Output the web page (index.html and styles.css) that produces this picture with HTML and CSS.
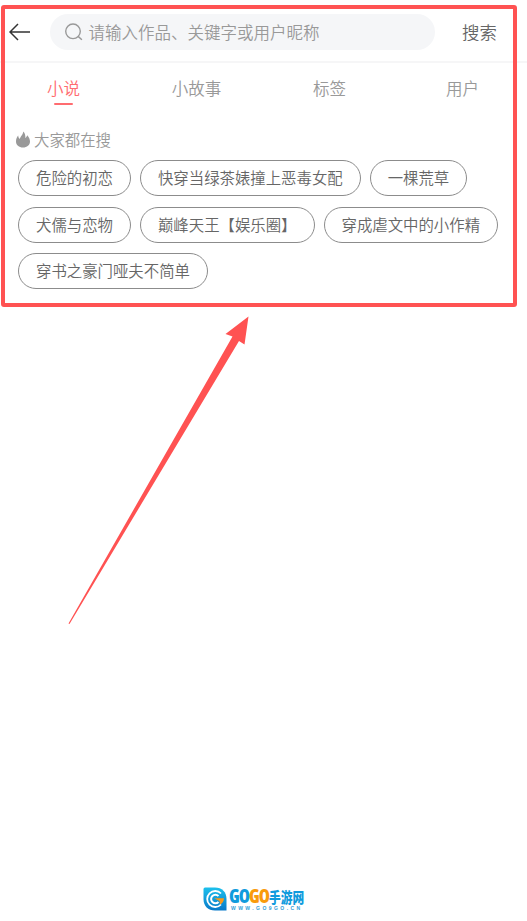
FILE: index.html
```
<!DOCTYPE html>
<html lang="zh-CN">
<head>
    <meta charset="UTF-8">
    <meta name="viewport" content="width=device-width, initial-scale=1.0">
    <title>搜索</title>
    <link rel="stylesheet" href="styles.css">
</head>
<body>
    <div class="page">
        <header class="search-header">
            <svg class="back-icon" width="22" height="18" viewBox="0 0 22 18">
                <path d="M9 1 L1 9 L9 17 M1 9 H21" fill="none" stroke="#333" stroke-width="1.5"/>
            </svg>
            <div class="search-box">
                <svg class="search-icon" width="19" height="18" viewBox="0 0 19 18">
                    <circle cx="8" cy="8.3" r="7.3" fill="none" stroke="#999" stroke-width="1.4"/>
                    <path d="M13.1 13.4 L16.9 16.7" stroke="#999" stroke-width="1.4"/>
                </svg>
                <span>请输入作品、关键字或用户昵称</span>
            </div>
            <div class="search-btn">搜索</div>
        </header>

        <nav class="tabs">
            <div class="tab active">小说</div>
            <div class="tab">小故事</div>
            <div class="tab">标签</div>
            <div class="tab">用户</div>
        </nav>

        <section class="hot">
            <div class="hot-title">
                <svg width="14" height="17" viewBox="0 0 14 17">
                    <path d="M7.2 0.5 C9 2.2 9.6 4.4 9.3 7 C10.3 6.4 10.9 5.4 11.2 4.2 C13 6 14 8.3 14 10.5 C14 14 11 16.5 7 16.5 C3 16.5 0 14 0 10.5 C0 8.3 0.8 6.2 2.2 4.6 C2.3 6 2.7 7.2 3.8 8 C4.4 5.2 7 4 7.2 0.5 Z" fill="#999"/>
                </svg>
                <span class="hot-label">大家都在搜</span>
            </div>
            <div class="chips">
                <span class="chip">危险的初恋</span>
                <span class="chip">快穿当绿茶婊撞上恶毒女配</span>
                <span class="chip">一棵荒草</span>
                <span class="chip">犬儒与恋物</span>
                <span class="chip">巅峰天王【娱乐圈】</span>
                <span class="chip">穿成虐文中的小作精</span>
                <span class="chip">穿书之豪门哑夫不简单</span>
            </div>
        </section>

        <footer class="logo">
            <svg width="24" height="24" viewBox="0 0 24 24">
                <defs>
                    <linearGradient id="blue" x1="0" y1="0" x2="0" y2="1">
                        <stop offset="0" stop-color="#1cc0ec"/>
                        <stop offset="1" stop-color="#0879c9"/>
                    </linearGradient>
                </defs>
                <path d="M2 0.5 H12 C19 0.5 23.5 5 23.5 12 V23.5 H12 C5 23.5 0.5 19 0.5 12 V2 Q0.5 0.5 2 0.5 Z" fill="url(#blue)"/>
                <path d="M18 6.5 A8 8 0 1 0 18 17.5" fill="none" stroke="#fff" stroke-width="1.8"/>
                <path d="M15.5 9 A4.3 4.3 0 1 0 15.5 15" fill="none" stroke="#fff" stroke-width="2"/>
                <path d="M11 11.2 H21 C21 14 19.5 16.5 17 17.5 L16.5 14 Z" fill="#f79a1c"/>
            </svg>
            <div class="logo-text">
                <div class="logo-name">
                    <span class="logo-latin">GO</span>
                    <span class="logo-latin logo-orange">GO</span>
                    <span class="logo-cjk">手游网</span>
                </div>
                <div class="logo-url">WWW.GO9GO.CN</div>
            </div>
        </footer>

        <!-- highlight frame and pointer over the page -->
        <div class="frame"></div>
        <svg class="arrow" width="527" height="921" viewBox="0 0 527 921">
            <path d="M248.5 316.5 L225.5 334 L232.5 336.5 L68.5 623.5 L69.5 624 L239 341 L244.5 344.5 Z" fill="#ff5252"/>
        </svg>
    </div>
</body>
</html>
```
FILE: styles.css
```
body {
    margin: 0;
    background-color: #fff;
    font-family: "Noto Sans CJK SC", sans-serif;
    font-weight: 350;
}

.page {
    position: relative;
    display: flex;
    flex-direction: column;
    height: 921px;
    overflow: hidden;
}

.search-header {
    display: flex;
    align-items: center;
    height: 63px;
    padding: 3px 0 0 9px;
    border-bottom: 2px solid #f6f6f7;
    box-sizing: border-box;
}

.back-icon {
    margin-right: 19px;
}

.search-box {
    display: flex;
    align-items: center;
    width: 385px;
    height: 36px;
    padding-left: 15px;
    border-radius: 18px;
    background-color: #f5f6f8;
    box-sizing: border-box;
    color: #999;
    font-size: 16.5px;
}

.search-icon {
    margin-right: 4.5px;
}

.search-btn {
    margin-left: 27px;
    padding-bottom: 2px;
    color: #666;
    font-size: 17.4px;
}

.tabs {
    display: grid;
    grid-template-columns: repeat(4, 133px);
    margin: 12px 0 0 -3px;
}

.tab {
    display: flex;
    flex-direction: column;
    align-items: center;
    height: 30px;
    line-height: 26px;
    color: #999;
    font-size: 16.5px;
}

.tab.active {
    color: #ff6c70;
}

.tab.active::after {
    content: "";
    width: 19px;
    height: 2px;
    margin-top: 2px;
    border-radius: 1px;
    background-color: #ff6c70;
}

.hot {
    padding: 22px 20px 0 16px;
}

.hot-title {
    display: flex;
    align-items: center;
    gap: 4px;
    height: 23px;
    color: #999;
    font-size: 15.4px;
}

.hot-title svg {
    margin-top: 1px;
}

.chips {
    display: flex;
    flex-wrap: wrap;
    gap: 10.3px 9px;
    margin: 10.4px 0 0 2px;
}

.chip {
    height: 36px;
    padding: 0 17px;
    border: 1px solid #8c8c8c;
    border-radius: 18px;
    box-sizing: border-box;
    line-height: 33px;
    color: #666;
    font-size: 15.4px;
    white-space: nowrap;
}

.logo {
    display: flex;
    align-items: flex-start;
    gap: 2px;
    margin: auto 0 10px 203px;
}

.logo-name {
    display: flex;
    align-items: center;
    height: 19px;
    line-height: 19px;
    color: #109bdd;
}

.logo-latin {
    width: 20px;
    font-family: "Open Sans", sans-serif;
    font-size: 19px;
    font-weight: 800;
    font-stretch: 75%;
    letter-spacing: -1px;
    transform: scaleX(0.95);
    transform-origin: left;
}

.logo-orange {
    color: #f99b0c;
}

.logo-cjk {
    font-size: 11.7px;
    font-weight: 900;
    transform: scaleY(1.25);
}

.logo-url {
    padding-left: 2px;
    line-height: 5px;
    color: #2f9cd8;
    font-family: "Liberation Sans", sans-serif;
    font-size: 5px;
    font-weight: bold;
    letter-spacing: 2.45px;
}

.frame {
    position: absolute;
    top: 5px;
    left: 1px;
    width: 516px;
    height: 302px;
    border: 4px solid #ff5252;
    border-radius: 3px;
    box-sizing: border-box;
}

.arrow {
    position: absolute;
    top: 0;
    left: 0;
}
```
